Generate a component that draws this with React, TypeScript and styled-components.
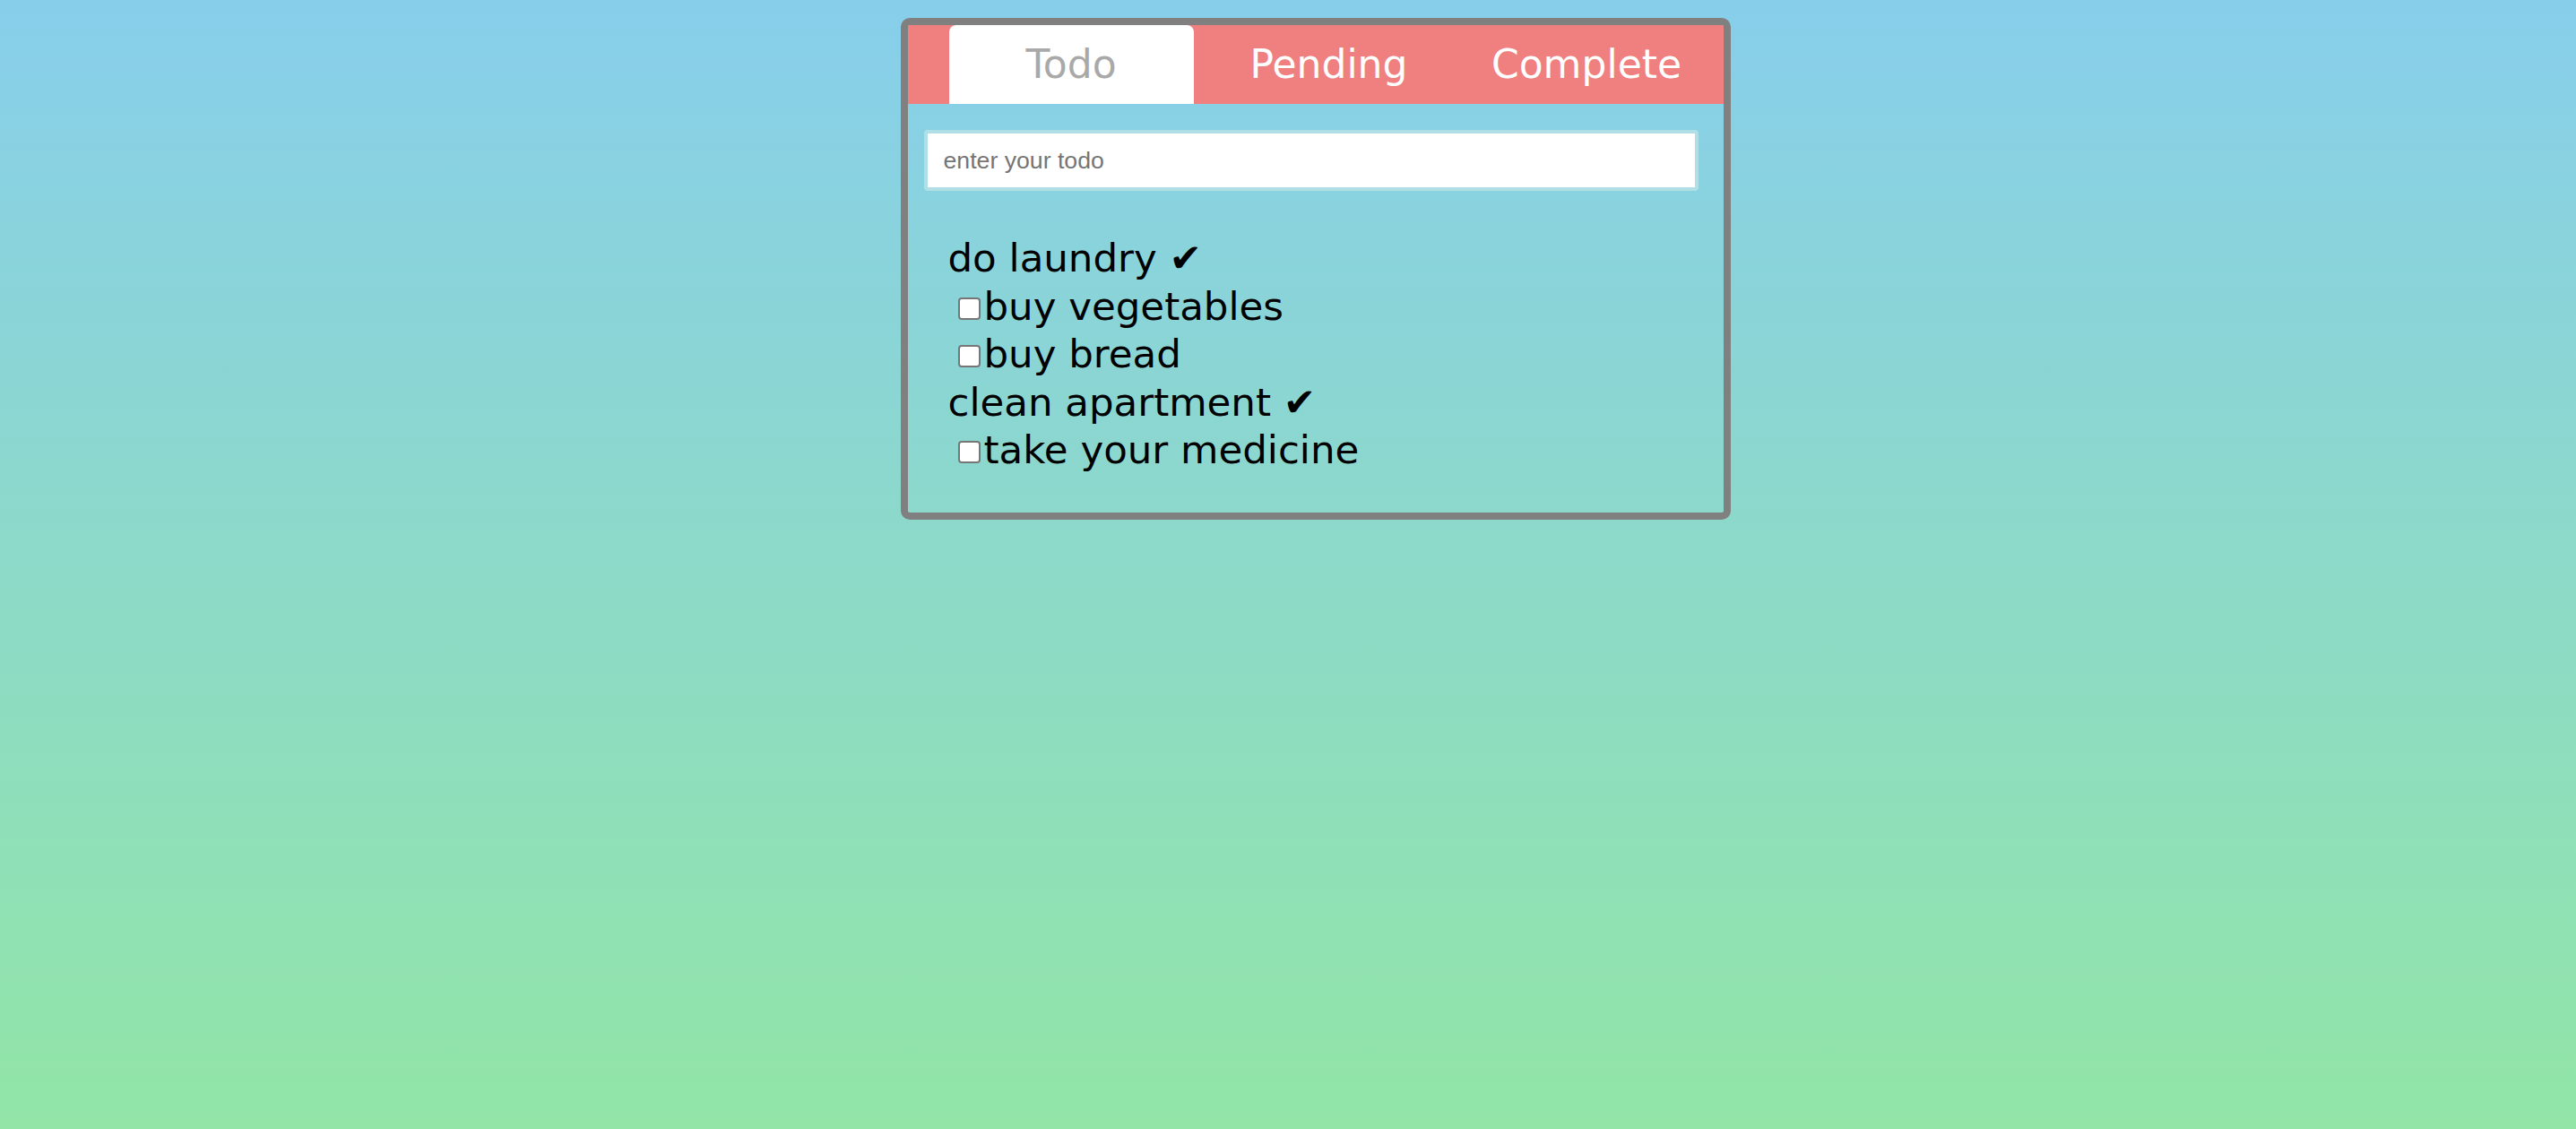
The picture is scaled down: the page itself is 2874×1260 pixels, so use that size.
import { useState } from "react";
import styled, { createGlobalStyle } from "styled-components";

type Filter = "todo" | "pending" | "complete";

interface TodoItem {
  id: number;
  text: string;
  done: boolean;
}

const initialTodos: TodoItem[] = [
  { id: 1, text: "do laundry", done: true },
  { id: 2, text: "buy vegetables", done: false },
  { id: 3, text: "buy bread", done: false },
  { id: 4, text: "clean apartment", done: true },
  { id: 5, text: "take your medicine", done: false },
];

const tabs: { key: Filter; label: string }[] = [
  { key: "todo", label: "Todo" },
  { key: "pending", label: "Pending" },
  { key: "complete", label: "Complete" },
];

function App() {
  const [todos, setTodos] = useState<TodoItem[]>(initialTodos);
  const [filter, setFilter] = useState<Filter>("todo");
  const [value, setValue] = useState("");

  const toggle = (id: number) => {
    setTodos((list) =>
      list.map((t) => (t.id === id ? { ...t, done: !t.done } : t))
    );
  };

  const addTodo = (e: React.KeyboardEvent<HTMLInputElement>) => {
    if (e.key !== "Enter" || value.trim().length <= 0) return;
    setTodos((list) => [
      ...list,
      { id: Date.now(), text: value.trim(), done: false },
    ]);
    setValue("");
  };

  const visible = todos.filter((t) => {
    if (filter === "pending") return !t.done;
    if (filter === "complete") return t.done;
    return true;
  });

  return (
    <>
      <GlobalStyle />
      <Page>
        <Card>
          <TabBar>
            {tabs.map((tab) => (
              <Tab
                key={tab.key}
                $active={filter === tab.key}
                onClick={() => setFilter(tab.key)}
              >
                {tab.label}
              </Tab>
            ))}
          </TabBar>
          <Body>
            <TodoInput
              placeholder="enter your todo"
              value={value}
              onChange={(e) => setValue(e.target.value)}
              onKeyDown={addTodo}
            />
            <List>
              {visible.map((item) =>
                item.done ? (
                  <Item key={item.id}>{item.text} ✔</Item>
                ) : (
                  <Item key={item.id}>
                    <Check
                      type="checkbox"
                      checked={false}
                      onChange={() => toggle(item.id)}
                    />
                    {item.text}
                  </Item>
                )
              )}
            </List>
          </Body>
        </Card>
      </Page>
    </>
  );
}

export default App;

const GlobalStyle = createGlobalStyle`
  html, body {
    margin: 0;
    padding: 0;
  }

  body {
    min-height: 100vh;
    background: linear-gradient(to bottom, #87ceeb, #92e5a6);
    font-family: "DejaVu Sans", Verdana, sans-serif;
  }
`;

const Page = styled.div`
  min-height: 100vh;
  box-sizing: border-box;
  display: flex;
  justify-content: center;
  align-items: flex-start;
  padding: 20px 0 0 61px;
`;

const Card = styled.div`
  width: 926px;
  box-sizing: border-box;
  border: 8px solid #808080;
  border-radius: 10px;
  overflow: hidden;
`;

const TabBar = styled.div`
  display: flex;
  column-gap: 14.5px;
  height: 88px;
  padding-left: 46px;
  background: #f08080;
`;

interface TabProps {
  $active: boolean;
}

const Tab = styled.button<TabProps>`
  width: 273px;
  height: 88px;
  padding: 0;
  border: none;
  border-radius: 8px 8px 0 0;
  background: ${(p) => (p.$active ? "#ffffff" : "transparent")};
  color: ${(p) => (p.$active ? "#a9a9a9" : "#ffffff")};
  font-family: "DejaVu Sans", Verdana, sans-serif;
  font-size: 44px;
  line-height: 88px;
  cursor: pointer;
`;

const Body = styled.div`
  padding: 29px 28px 42px 18px;
`;

const TodoInput = styled.input`
  display: block;
  width: 100%;
  height: 68px;
  box-sizing: border-box;
  padding: 0 18px;
  border: 4px solid #b0e0e6;
  border-radius: 4px;
  background: #ffffff;
  font-family: "Liberation Sans", Arial, sans-serif;
  font-size: 26.67px;
  color: #000000;
  outline: none;

  &::placeholder {
    color: #757575;
  }
`;

const List = styled.ul`
  list-style: none;
  margin: 49px 0 0;
  padding: 0 0 0 27px;
`;

const Item = styled.li`
  font-size: 43.5px;
  line-height: 53.6px;
  color: #000000;
  white-space: nowrap;
`;

const Check = styled.input`
  appearance: none;
  width: 25px;
  height: 25px;
  box-sizing: border-box;
  margin: 0 4px 0 11px;
  border: 2px solid #767676;
  border-radius: 4px;
  background: #ffffff;
  vertical-align: baseline;
  cursor: pointer;
`;
